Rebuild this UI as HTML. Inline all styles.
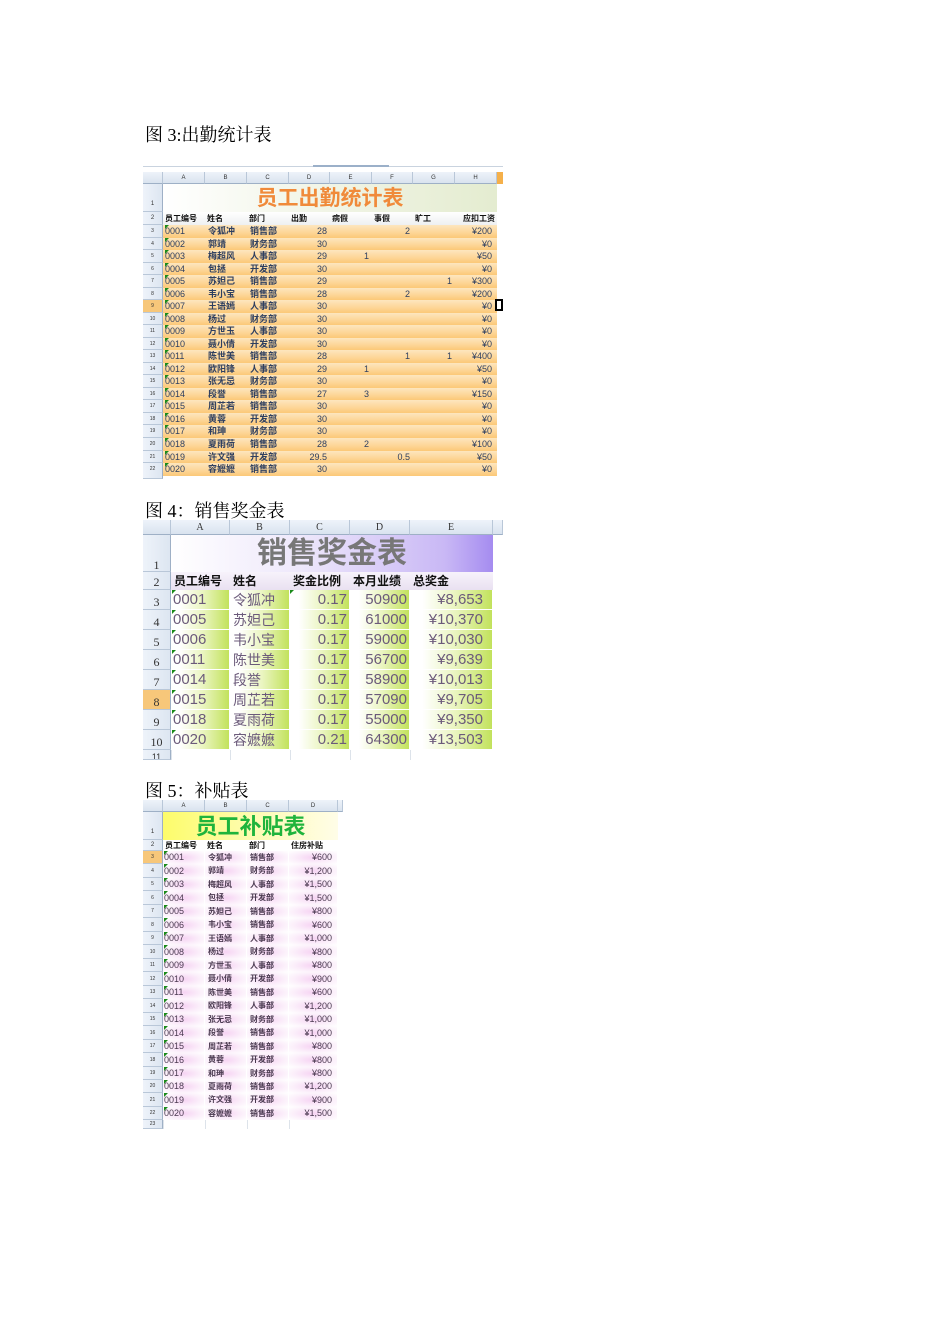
<!DOCTYPE html>
<html><head><meta charset="utf-8">
<style>
html,body{margin:0;padding:0;background:#fff;}
body{width:950px;height:1344px;position:relative;overflow:hidden;font-family:"Liberation Sans","Noto Sans CJK SC",sans-serif;}
.cap{position:absolute;left:145px;font-family:"Liberation Serif","Noto Serif CJK SC",serif;font-size:18px;color:#000;line-height:20px;}
.c{position:absolute;box-sizing:border-box;overflow:hidden;white-space:nowrap;}
.hd{background:linear-gradient(#eef3fa,#d9e3ef);border-right:1px solid #b9c7d8;border-bottom:1px solid #9eb0c6;color:#333;text-align:center;}
.rn{background:linear-gradient(90deg,#eef3fa,#dde6f1);border-bottom:1px solid #b9c7d8;border-right:1px solid #9eb0c6;color:#333;text-align:center;}
.tri{position:absolute;left:0;top:0;width:0;height:0;border-top:4px solid #1a8a1a;border-right:4px solid transparent;}
</style></head><body>
<div class="cap" style="top:125px">图 3:出勤统计表</div>
<div class="cap" style="top:501px">图 4：销售奖金表</div>
<div class="cap" style="top:781px">图 5：补贴表</div>
<div id="root"></div>
<script>
var R=document.getElementById('root');
function d(x,y,w,h,cls,txt,st){var e=document.createElement('div');e.className='c '+(cls||'');e.style.left=x+'px';e.style.top=y+'px';e.style.width=w+'px';e.style.height=h+'px';if(st)e.style.cssText+=st;if(txt!=null)e.innerHTML=txt;R.appendChild(e);return e;}
function tri(e){var t=document.createElement('div');t.className='tri';e.appendChild(t);}

/* ===== Table 1 ===== */
(function(){
var X0=143,cols=[163,205,247,289,330,372,413,455,497,503],L='ABCDEFGH';
d(143,166,360,1,'',null,'background:#c9d3df');
d(313,165,76,2,'',null,'background:#9bb0c9');
d(X0,172,20,12,'hd','',"font-size:6px;line-height:12px");
for(var i=0;i<8;i++)d(cols[i],172,cols[i+1]-cols[i],12,'hd',L[i],'font-size:6px;line-height:12px');
d(497,172,6,12,'',null,'background:#f5b04a');
d(X0,184,20,28,'rn','1','font-size:6px;line-height:40px');
d(163,184,334,28,'','员工出勤统计表','background:linear-gradient(90deg,#fff 0%,#f3f6ea 40%,#e4ecd0 100%);color:#f08a3a;font-weight:bold;font-size:21px;line-height:30px;text-align:center;');
d(X0,212,20,13,'rn','2','font-size:6px;line-height:13px');
var h2=['员工编号','姓名','部门','出勤','病假','事假','旷工','应扣工资'],al=['left','left','left','left','left','left','left','right'];
d(163,212,334,13,'',null,'background:linear-gradient(#fff,#eef0f2)');
for(var i=0;i<8;i++)d(cols[i]+2,212,cols[i+1]-cols[i]-4,13,'',h2[i],'font-size:8px;font-weight:bold;line-height:14px;color:#111;text-align:'+al[i]);
var data=[['0001','令狐冲','销售部','28','','2','','200'],['0002','郭靖','财务部','30','','','','0'],['0003','梅超风','人事部','29','1','','','50'],['0004','包拯','开发部','30','','','','0'],['0005','苏妲己','销售部','29','','','1','300'],['0006','韦小宝','销售部','28','','2','','200'],['0007','王语嫣','人事部','30','','','','0'],['0008','杨过','财务部','30','','','','0'],['0009','方世玉','人事部','30','','','','0'],['0010','聂小倩','开发部','30','','','','0'],['0011','陈世美','销售部','28','','1','1','400'],['0012','欧阳锋','人事部','29','1','','','50'],['0013','张无忌','财务部','30','','','','0'],['0014','段誉','销售部','27','3','','','150'],['0015','周芷若','销售部','30','','','','0'],['0016','黄蓉','开发部','30','','','','0'],['0017','和珅','财务部','30','','','','0'],['0018','夏雨荷','销售部','28','2','','','100'],['0019','许文强','开发部','29.5','','0.5','','50'],['0020','容嬷嬷','销售部','30','','','','0']];
var rh=12.53;
for(var r=0;r<20;r++){var y=Math.round(225+r*rh),h=Math.round(225+(r+1)*rh)-y;
 d(X0,y,20,h,'rn',String(r+3),'font-size:5px;line-height:'+h+'px;'+(r==6?'background:#f7c77a;':''));
 d(163,y,334,h,'',null,'background:linear-gradient(#fde6bf,#fdd596 60%,#fcc877)');
 var row=data[r],st='font-size:9px;line-height:'+h+'px;color:#2e3f60;';
 var a=d(165,y,40,h,'',row[0],st);tri(a);
 d(208,y,40,h,'',row[1],st+'font-weight:bold');
 d(250,y,40,h,'',row[2],st+'font-weight:bold');
 for(var k=3;k<7;k++)if(row[k])d(cols[k],y,cols[k+1]-cols[k]-3,h,'',row[k],st+'text-align:right');
 d(455,y,37,h,'','&#165;'+row[7],st+'text-align:right');
}
d(X0,475,20,4,'rn','');
d(495,299,8,12,'',null,'border:2px solid #000;background:#fff');
})();

/* ===== Table 2 ===== */
(function(){
var X0=143,cols=[171,230,290,350,410,493],L='ABCDE';
d(X0,520,28,15,'hd','','');
for(var i=0;i<5;i++)d(cols[i],520,cols[i+1]-cols[i],15,'hd',L[i],'font-family:Liberation Serif,serif;font-size:10px;line-height:15px');
d(493,520,10,15,'hd','');
d(X0,535,28,37,'rn','1','font-family:Liberation Serif,serif;font-size:12px;line-height:60px');
d(171,535,322,37,'','销售奖金表','background:linear-gradient(90deg,#fff 0%,#eee8fb 40%,#c9b8f5 85%,#a58cf0 100%);color:#777;font-weight:bold;font-size:30px;line-height:38px;text-align:center;');
d(X0,572,28,18,'rn','2','font-family:Liberation Serif,serif;font-size:12px;line-height:20px');
d(171,572,322,18,'',null,'background:linear-gradient(#f7f3fb,#e9e1f1)');
var h2=['员工编号','姓名','奖金比例','本月业绩','总奖金'];
for(var i=0;i<5;i++)d(cols[i]+3,572,cols[i+1]-cols[i]-3,18,'',h2[i],'font-size:12px;font-weight:bold;line-height:18px;color:#111');
var data=[['0001','令狐冲','0.17','50900','8,653'],['0005','苏妲己','0.17','61000','10,370'],['0006','韦小宝','0.17','59000','10,030'],['0011','陈世美','0.17','56700','9,639'],['0014','段誉','0.17','58900','10,013'],['0015','周芷若','0.17','57090','9,705'],['0018','夏雨荷','0.17','55000','9,350'],['0020','容嬷嬷','0.21','64300','13,503']];
for(var r=0;r<8;r++){var y=590+r*20,h=20;
 d(X0,y,28,h,'rn',String(r+3),'font-family:Liberation Serif,serif;font-size:12px;line-height:24px;'+(r==5?'background:#f7c77a;':''));
 for(var i=0;i<5;i++){d(cols[i],y,cols[i+1]-cols[i]-1,h-1,'',null,'background:linear-gradient(90deg,#fff 15%,#eaf5c0 55%,#c2e25c 100%);');}
 var row=data[r],st='line-height:20px;color:#6b5a7a;';
 tri(d(172,y,58,h,'',row[0],st+'font-size:15px;padding-left:1px'));
 d(233,y,57,h,'',row[1],st+'font-size:14px');
 var c=d(290,y,57,h,'',row[2],st+'font-size:15px;text-align:right');if(r==0)tri(c);
 d(350,y,57,h,'',row[3],st+'font-size:15px;text-align:right');
 d(410,y,73,h,'','&#165;'+row[4],st+'font-size:15px;text-align:right');
}
d(X0,750,28,10,'rn','11','font-size:9px;line-height:14px');
for(var i=0;i<5;i++)d(cols[i],750,1,10,'',null,'background:#dde3ea');
})();

/* ===== Table 3 ===== */
(function(){
var X0=143,cols=[163,205,247,289,338],L='ABCD';
d(X0,800,20,12,'hd','');
for(var i=0;i<4;i++)d(cols[i],800,cols[i+1]-cols[i],12,'hd',L[i],'font-size:6px;line-height:12px');
d(338,800,5,12,'hd','');
d(X0,812,20,28,'rn','1','font-size:6px;line-height:40px');
d(163,812,175,28,'','员工补贴表','background:linear-gradient(90deg,#fdfc6a 0%,#fefcb0 50%,#fffde8 100%);color:#1fb43c;font-weight:bold;font-size:22px;line-height:30px;text-align:center;');
d(X0,840,20,11,'rn','2','font-size:6px;line-height:11px');
var h2=['员工编号','姓名','部门','住房补贴'];
for(var i=0;i<4;i++)d(cols[i]+2,840,cols[i+1]-cols[i],11,'',h2[i],'font-size:8px;font-weight:bold;line-height:12px;color:#111');
var names=['令狐冲','郭靖','梅超风','包拯','苏妲己','韦小宝','王语嫣','杨过','方世玉','聂小倩','陈世美','欧阳锋','张无忌','段誉','周芷若','黄蓉','和珅','夏雨荷','许文强','容嬷嬷'];
var deps=['销售部','财务部','人事部','开发部','销售部','销售部','人事部','财务部','人事部','开发部','销售部','人事部','财务部','销售部','销售部','开发部','财务部','销售部','开发部','销售部'];
var sub=['600','1,200','1,500','1,500','800','600','1,000','800','800','900','600','1,200','1,000','1,000','800','800','800','1,200','900','1,500'];
var rh=13.47;
for(var r=0;r<20;r++){var y=Math.round(851+r*rh),h=Math.round(851+(r+1)*rh)-y;
 d(X0,y,20,h,'rn',String(r+3),'font-size:5px;line-height:'+h+'px;'+(r==0?'background:#f7c77a;':''));
 for(var i=0;i<4;i++)d(cols[i],y,cols[i+1]-cols[i]-1,h,'',null,'background:radial-gradient(ellipse at 50% 50%,#f6d3f3 0%,#fbeefa 55%,#fff 100%)');
 var st='line-height:'+h+'px;color:#4a3a50;font-size:9px;';
 tri(d(164,y,40,h,'',String(r+1).padStart(4,'0'),st));
 d(208,y,40,h,'',names[r],st+'font-weight:bold;font-size:8px');
 d(250,y,40,h,'',deps[r],st+'font-weight:bold;font-size:8px');
 d(289,y,43,h,'','&#165;'+sub[r],st+'text-align:right');
}
d(X0,1120,20,9,'rn','23','font-size:5px;line-height:9px');
for(var i=0;i<4;i++)d(cols[i],1120,1,9,'',null,'background:#dde3ea');
})();
</script>
</body></html>
